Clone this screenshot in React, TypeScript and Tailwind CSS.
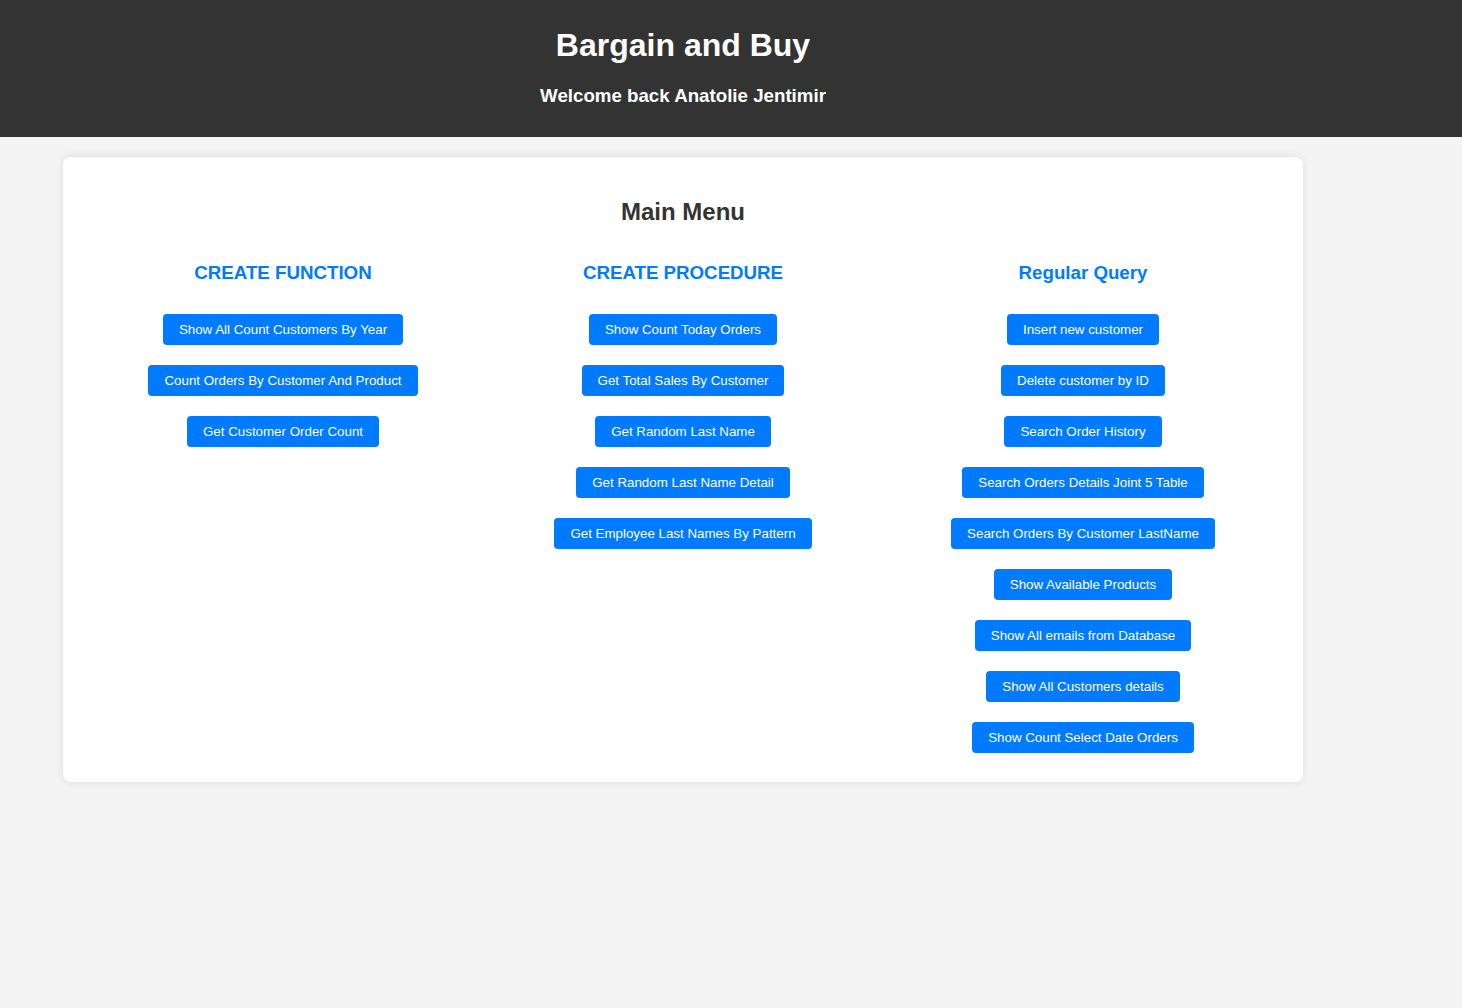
import React from "react";

const columns = [
  {
    title: "CREATE FUNCTION",
    items: [
      "Show All Count Customers By Year",
      "Count Orders By Customer And Product",
      "Get Customer Order Count",
    ],
  },
  {
    title: "CREATE PROCEDURE",
    items: [
      "Show Count Today Orders",
      "Get Total Sales By Customer",
      "Get Random Last Name",
      "Get Random Last Name Detail",
      "Get Employee Last Names By Pattern",
    ],
  },
  {
    title: "Regular Query",
    items: [
      "Insert new customer",
      "Delete customer by ID",
      "Search Order History",
      "Search Orders Details Joint 5 Table",
      "Search Orders By Customer LastName",
      "Show Available Products",
      "Show All emails from Database",
      "Show All Customers details",
      "Show Count Select Date Orders",
    ],
  },
];

export default function App() {
  return (
    <div className="min-h-screen bg-[#f4f4f4] font-['Liberation_Sans',Arial,sans-serif] text-[#333]">
      {/* header */}
      <header className="h-[137px] bg-[#333] text-white">
        <div className="w-[1366px] text-center">
          <h1 className="pt-[27px] text-[32px] font-bold leading-[37px]">Bargain and Buy</h1>
          <h2 className="mt-[21px] text-[18.72px] font-bold leading-[22px]">Welcome back Anatolie Jentimir</h2>
        </div>
      </header>

      {/* main card */}
      <main className="ml-[63px] mt-[20px] w-[1240px] rounded-lg bg-white px-5 pt-[41px] pb-[29px] shadow-[0_0_10px_rgba(0,0,0,0.1)]">
        <h2 className="text-center text-[24px] font-bold leading-[28px]">Main Menu</h2>
        <div className="mt-[36px] grid grid-cols-3">
          {columns.map((col, i) => (
            <div key={i} className="flex flex-col items-center">
              <h3 className="text-[18.72px] font-bold leading-[22px] text-[#007bff]">{col.title}</h3>
              <div className="mt-[30px] flex flex-col items-center gap-5">
                {col.items.map((item, j) => (
                  <button
                    key={j}
                    className="h-[31px] rounded bg-[#007bff] px-4 text-[13.333px] leading-[16px] text-white"
                  >
                    {item}
                  </button>
                ))}
              </div>
            </div>
          ))}
        </div>
      </main>
    </div>
  );
}
